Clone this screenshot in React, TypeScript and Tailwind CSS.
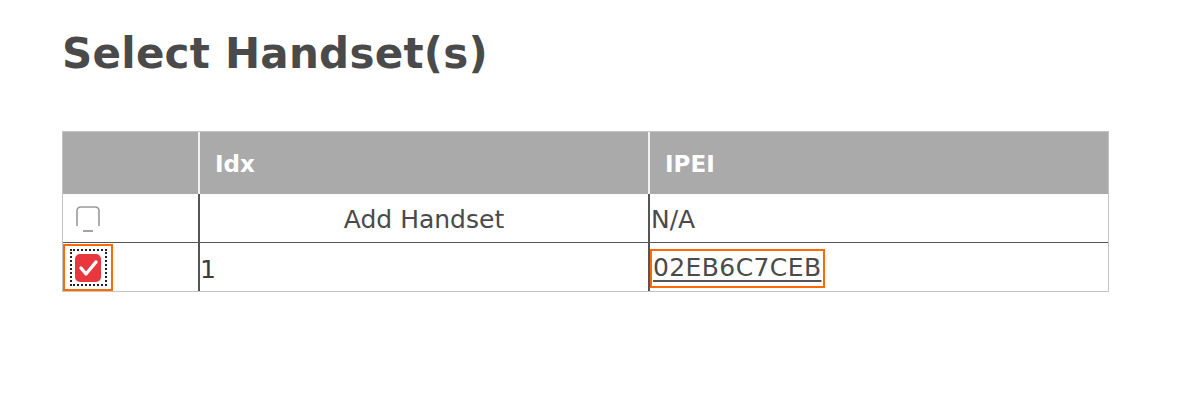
import React from "react";

function UncheckedBox() {
  return (
    <svg width="28" height="28" viewBox="0 0 28 28" className="block">
      <path
        d="M3 21 V6 Q3 2 7 2 H21 Q25 2 25 6 V21"
        fill="none"
        stroke="#9a9a9a"
        strokeWidth="1.6"
      />
      <path d="M9 26 H19" stroke="#9a9a9a" strokeWidth="1.8" />
    </svg>
  );
}

function CheckedBox() {
  return (
    <div className="flex items-center justify-center border-2 border-[#ff6a00] w-[50px] h-[47px] bg-white">
      <div className="border-2 border-dotted border-[#222] w-[37px] h-[37px] flex items-center justify-center">
        <svg width="28" height="30" viewBox="0 0 28 30" className="block">
          <rect x="1" y="1" width="26" height="28" rx="5" fill="#e8383d" />
          <path
            d="M7 15 L12 21 L22 9"
            fill="none"
            stroke="#ffffff"
            strokeWidth="3.4"
            strokeLinecap="round"
            strokeLinejoin="round"
          />
        </svg>
      </div>
    </div>
  );
}

export default function App() {
  const font = { fontFamily: '"DejaVu Sans", Verdana, sans-serif' };
  return (
    <div className="bg-white w-[1200px] h-[409px] text-[#4a4a4a]" style={font}>
      <div className="pt-[29px] pl-[62px]">
        <h1 className="text-[42px] leading-[50px] font-bold text-[#4a4a4a] tracking-[0.25px]">
          Select Handset(s)
        </h1>
      </div>

      <div className="mt-[52px] ml-[62px] w-[1047px] border border-[#c4c4c4]">
        <div className="flex h-[62px] bg-[#aaaaaa] text-white font-bold text-[23px]">
          <div className="w-[135px]" />
          <div className="w-[450px] border-l-2 border-[#f2f2f2] flex items-center pl-[15px] pt-[3px]">
            Idx
          </div>
          <div className="flex-1 border-l-2 border-[#f2f2f2] flex items-center pl-[15px] pt-[3px]">
            IPEI
          </div>
        </div>

        <div className="flex h-[49px] border-b border-[#555555] text-[25px]">
          <div className="w-[135px] flex items-center pl-[11px] pt-[2px]">
            <UncheckedBox />
          </div>
          <div className="w-[450px] border-l-2 border-[#555555] flex items-center justify-center pt-[4px]">
            Add Handset
          </div>
          <div className="flex-1 border-l-2 border-[#555555] flex items-center pl-[1px] pt-[4px]">
            N/A
          </div>
        </div>

        <div className="flex h-[48px] text-[25px]">
          <div className="w-[135px] flex items-start pt-[1px]">
            <CheckedBox />
          </div>
          <div className="w-[450px] border-l-2 border-[#555555] flex items-center pl-0 pt-[6px] text-[#3a3a3a]">
            1
          </div>
          <div className="flex-1 border-l-2 border-[#555555] flex items-start pt-[6px]">
            <a className="border-2 border-[#ff6a00] h-[39px] pl-[1px] pr-[2px] pt-[3px] leading-[28px] tracking-[0.4px] underline decoration-[#555] underline-offset-[4px] text-[#4a4a4a]">
              02EB6C7CEB
            </a>
          </div>
        </div>
      </div>
    </div>
  );
}
